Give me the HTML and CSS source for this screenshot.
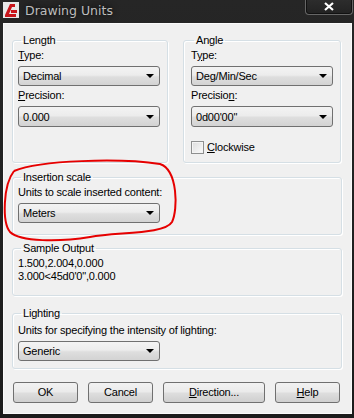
FILE: index.html
```html
<!DOCTYPE html>
<html>
<head>
<meta charset="utf-8">
<link rel="stylesheet" href="styles.css">
</head>
<body>
<div class="window">
  <div class="titlebar">
    <svg class="app-icon" width="16" height="16" viewBox="0 0 16 16">
      <rect x="0" y="0" width="16" height="16" fill="#e8e8e8"/>
      <path d="M2 13 L7 2 L12 2 L12 5 L9 5 L6 12 L13 12 L13 15 L2 15 Z" fill="#c8151b"/>
      <path d="M8 8 L14 8 L14 11 L8 11 Z" fill="#c8151b"/>
    </svg>
    <span class="title">Drawing Units</span>
    <div class="close">
      <svg width="10" height="9" viewBox="0 0 10 9"><path d="M1 1 L9 8 M9 1 L1 8" stroke="#ffffff" stroke-width="2.2"/></svg>
    </div>
  </div>
  <div class="client">
    <div class="top-row">
      <fieldset class="group g-length">
        <legend>Length</legend>
        <div class="lbl"><u>T</u>ype:</div>
        <div class="combo"><span>Decimal</span><i class="arrow"></i></div>
        <div class="lbl lbl2"><u>P</u>recision:</div>
        <div class="combo combo-tall"><span>0.000</span><i class="arrow"></i></div>
      </fieldset>
      <fieldset class="group g-angle">
        <legend>Angle</legend>
        <div class="lbl">T<u>y</u>pe:</div>
        <div class="combo"><span>Deg/Min/Sec</span><i class="arrow"></i></div>
        <div class="lbl lbl2">Precisio<u>n</u>:</div>
        <div class="combo combo-tall"><span>0d00'00"</span><i class="arrow"></i></div>
        <div class="check-row"><span class="checkbox"></span><span><u>C</u>lockwise</span></div>
      </fieldset>
    </div>
    <fieldset class="group g-insert">
      <legend>Insertion scale</legend>
      <div class="lbl lbl-insert">Units to scale inserted content:</div>
      <div class="combo"><span>Meters</span><i class="arrow"></i></div>
    </fieldset>
    <fieldset class="group g-sample">
      <legend>Sample Output</legend>
      <div class="sample-line">1.500,2.004,0.000</div>
      <div class="sample-line">3.000&lt;45d0'0",0.000</div>
    </fieldset>
    <fieldset class="group g-light">
      <legend>Lighting</legend>
      <div class="lbl">Units for specifying the intensity of lighting:</div>
      <div class="combo"><span>Generic</span><i class="arrow"></i></div>
    </fieldset>
    <div class="buttons">
      <div class="btn">OK</div>
      <div class="btn">Cancel</div>
      <div class="btn btn-wide"><u>D</u>irection...</div>
      <div class="btn"><u>H</u>elp</div>
    </div>
  </div>
  <svg class="annotation" width="354" height="418" viewBox="0 0 354 418">
    <path d="M14 171 C40 160 120 158 160 164 C178 170 178 210 172 222 C165 234 120 232 90 237 C60 242 20 242 10 232 C2 222 3 185 14 171" fill="none" stroke="#e60000" stroke-width="2"/>
  </svg>
</div>
</body>
</html>
```

FILE: styles.css
```css
html, body {
  margin: 0;
  padding: 0;
}
body {
  width: 354px;
  height: 418px;
  overflow: hidden;
  background: #1d1d1d;
  font-family: "Liberation Sans", Arial, sans-serif;
  font-size: 11px;
  letter-spacing: -0.2px;
  color: #000;
}
.window {
  position: relative;
  width: 354px;
  height: 418px;
  background: linear-gradient(#262626, #1b1b1b);
}
.titlebar {
  position: relative;
  height: 23px;
  display: flex;
  align-items: center;
}
.app-icon {
  margin-left: 3px;
  margin-top: -3px;
}
.title {
  margin-left: 6px;
  margin-top: -2px;
  font-family: "DejaVu Sans", sans-serif;
  font-size: 12.5px;
  letter-spacing: 0;
  color: #bdbdbd;
  text-shadow: 0 0 6px #000;
}
.close {
  position: absolute;
  right: 1px;
  top: -2px;
  width: 46px;
  height: 16px;
  border: 1px solid #666;
  border-top: none;
  border-radius: 0 0 4px 4px;
  background: linear-gradient(#2e2e2e, #222);
  display: flex;
  align-items: center;
  justify-content: center;
  box-shadow: inset 0 0 0 1px #111;
}
.client {
  box-sizing: border-box;
  margin-left: 3px;
  width: 349px;
  height: 391px;
  background: #f0f0f0;
  border: 1px solid #fafafa;
  padding: 9px 9px 0 8px;
}
.top-row {
  display: flex;
  gap: 15px;
  align-items: stretch;
}
.group {
  margin: 0;
  border: 1px solid #d5dfe5;
  border-radius: 3px;
  box-shadow: inset 1px 1px 0 #fff, 1px 1px 0 #fff;
  padding: 2px 5px 0 5px;
  min-width: 0;
}
.group legend {
  padding: 0 2px;
  margin-left: 3px;
  line-height: 14px;
}
.g-length {
  width: 156px;
  box-sizing: border-box;
}
.g-angle {
  width: 158px;
  box-sizing: border-box;
  padding-left: 7px;
  padding-right: 6px;
  padding-bottom: 8px;
}
.lbl {
  line-height: 13px;
  height: 13px;
  white-space: nowrap;
}
.combo {
  margin-top: 4px;
  box-sizing: border-box;
  width: 142px;
  height: 20px;
  border: 1px solid #707070;
  border-radius: 3px;
  background: linear-gradient(#f3f3f3 0%, #ececec 45%, #dedede 55%, #d3d3d3 100%);
  display: flex;
  align-items: center;
  justify-content: space-between;
  padding: 0 4px 0 4px;
}
.combo-tall {
  height: 21px;
}
.combo span {
  line-height: 13px;
  margin-top: 1px;
}
.arrow {
  width: 0;
  height: 0;
  border-left: 4px solid transparent;
  border-right: 4px solid transparent;
  border-top: 4px solid #000;
  margin-right: 1px;
}
.lbl2 {
  margin-top: 3px;
}
.check-row {
  margin-top: 14px;
  display: flex;
  align-items: center;
  gap: 3px;
  line-height: 13px;
}
.checkbox {
  box-sizing: border-box;
  width: 13px;
  height: 13px;
  border: 1px solid #8e8f8f;
  background: linear-gradient(135deg, #dcdcdc, #fbfbfb);
  box-shadow: inset 0 0 0 1px #f4f4f4;
}
.g-insert {
  margin-top: 7px;
  padding-top: 2px;
  padding-bottom: 11px;
}
.lbl-insert {
  margin-bottom: 3px;
}
.g-sample {
  margin-top: 6px;
  padding-top: 2px;
  padding-bottom: 12px;
}
.sample-line {
  line-height: 13px;
}
.g-light {
  margin-top: 10px;
  padding-top: 4px;
  padding-bottom: 7px;
}
.buttons {
  display: flex;
  gap: 10px;
  margin-top: 13px;
  padding-left: 1px;
}
.btn {
  box-sizing: border-box;
  width: 65px;
  height: 21px;
  border: 1px solid #707070;
  border-radius: 3px;
  background: linear-gradient(#f2f2f2 0%, #ebebeb 45%, #dddddd 55%, #cfcfcf 100%);
  display: flex;
  align-items: center;
  justify-content: center;
  line-height: 13px;
}
.btn-wide {
  width: 102px;
}
.annotation {
  position: absolute;
  left: 0;
  top: 0;
  pointer-events: none;
}
```
